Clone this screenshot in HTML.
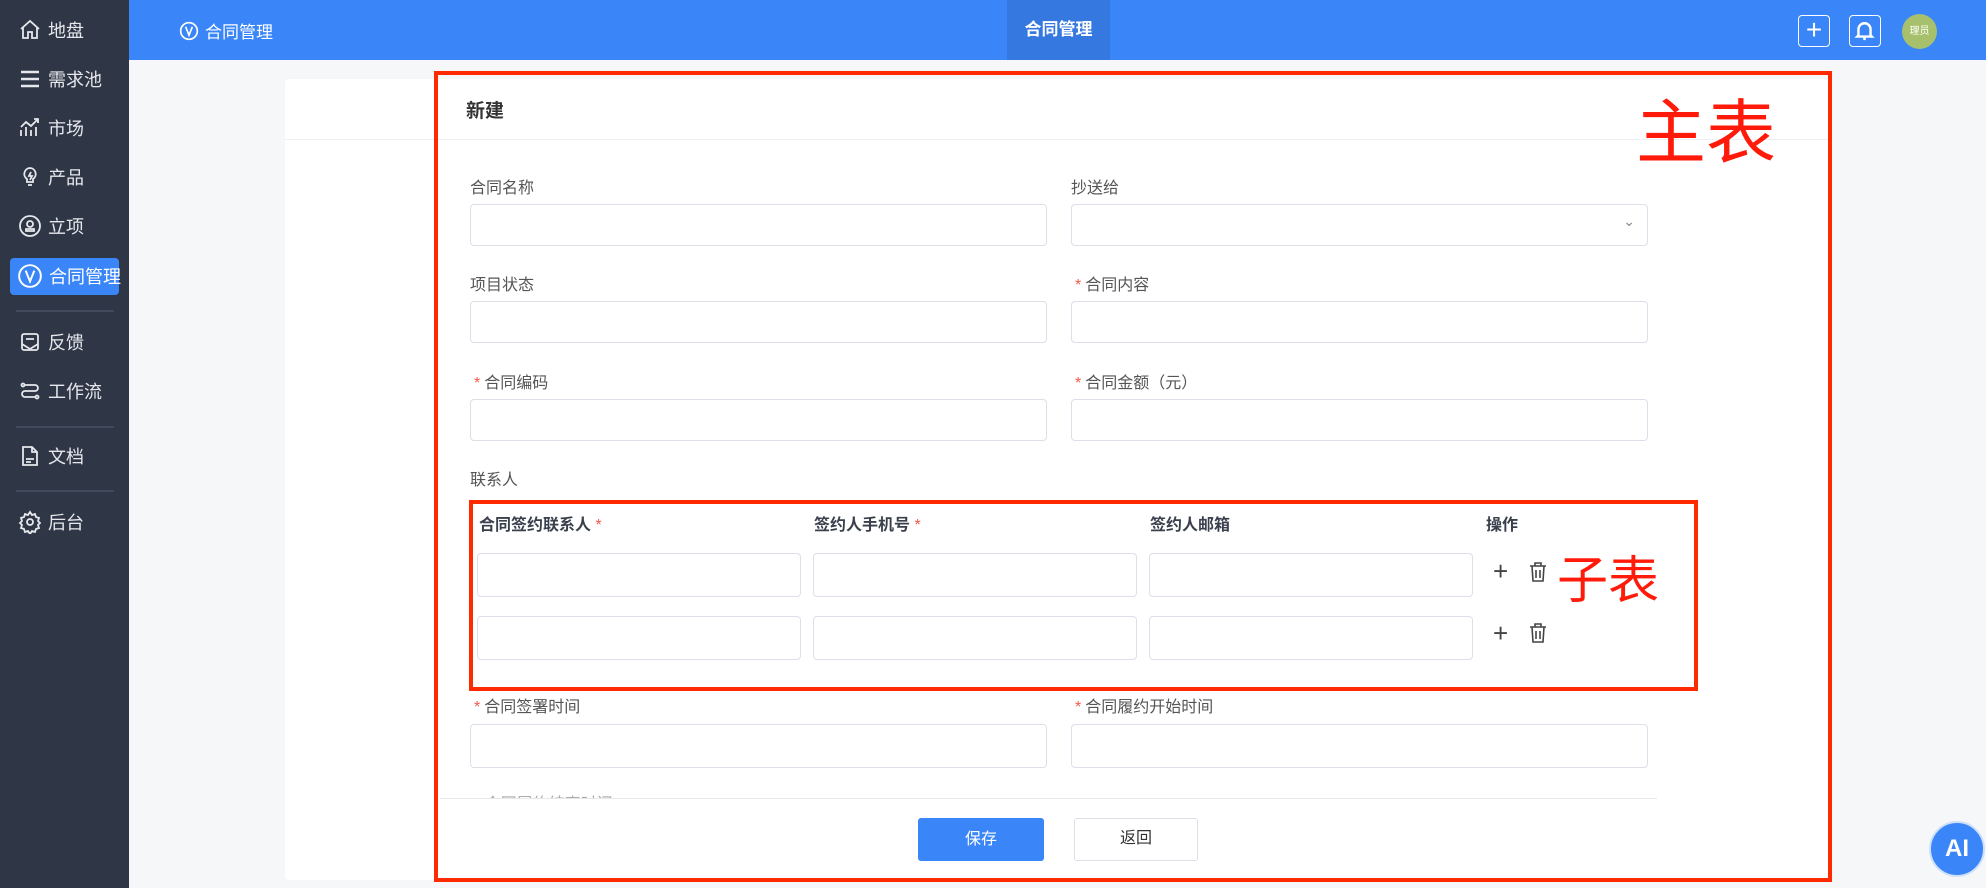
<!DOCTYPE html>
<html><head><meta charset="utf-8"><style>
*{margin:0;padding:0;box-sizing:border-box}
body{width:1986px;height:888px;overflow:hidden;background:#f6f7f9;font-family:"Liberation Sans","Noto Sans CJK SC",sans-serif;position:relative;color:#333}
.a{position:absolute}
#side{left:0;top:0;width:129px;height:888px;background:#2f3747}
.mi{position:absolute;left:18px;color:#e6e8ec;font-size:18px;display:flex;align-items:center;gap:6px;height:30px}
.mi svg{width:24px;height:24px;fill:none;stroke:#e6e8ec;stroke-width:1.8}
.sep{position:absolute;left:16px;width:98px;height:2px;background:#414a5a}
#hdr{left:129px;top:0;width:1857px;height:60px;background:#3a86f8}
.lbl{position:absolute;font-size:16px;color:#555}
.lbl b{color:#f5584a;font-weight:normal;margin-right:4px}
.in{position:absolute;height:42px;border:1.5px solid #dcdfe8;border-radius:4px;background:#fff}
.th{position:absolute;font-size:16px;font-weight:bold;color:#3a3f4c}
.th b{color:#f5584a;font-weight:normal}
.red{position:absolute;border:4px solid #ff2a00}
</style></head><body>
<div id="side" class="a">
 <div class="mi" style="top:15px"><svg viewBox="0 0 24 24"><path d="M3 11l9-8 9 8M5 9v11h5v-6h4v6h5V9"/></svg>地盘</div>
 <div class="mi" style="top:64px"><svg viewBox="0 0 24 24"><path d="M3 5h18M3 12h18M3 19h18" stroke-width="2.4"/></svg>需求池</div>
 <div class="mi" style="top:113px"><svg viewBox="0 0 24 24"><path d="M3 20v-6M8 20v-9M13 20v-6M18 20v-9M3 11l5-5 5 4 7-7M16 3h4v4"/></svg>市场</div>
 <div class="mi" style="top:162px"><svg viewBox="0 0 24 24"><path d="M12 3a6 6 0 0 0-3 11v3h6v-3a6 6 0 0 0-3-11zM10 20h4M13 7l-2 4h3l-2 4"/></svg>产品</div>
 <div class="mi" style="top:211px"><svg viewBox="0 0 24 24"><circle cx="12" cy="12" r="10"/><circle cx="12" cy="10" r="3"/><path d="M8 17h8v-2H8z"/></svg>立项</div>
 <div class="a" style="left:10px;top:258px;width:109px;height:37px;background:#3a86f8;border-radius:4px"></div>
 <div class="mi" style="top:261px;left:17px;color:#fff"><svg viewBox="0 0 24 24" style="stroke:#fff;width:26px;height:26px"><circle cx="12" cy="12" r="10"/><path d="M8 7l4 10 4-10"/></svg>合同管理</div>
 <div class="sep" style="top:310px"></div>
 <div class="mi" style="top:327px"><svg viewBox="0 0 24 24"><rect x="4" y="4" width="16" height="16" rx="2"/><path d="M4 14l8 5 8-5M8 9h8"/></svg>反馈</div>
 <div class="mi" style="top:376px"><svg viewBox="0 0 24 24"><circle cx="5" cy="6" r="1.5"/><circle cx="19" cy="18" r="1.5"/><path d="M7 6h10a3 3 0 0 1 0 6H7a3 3 0 0 0 0 6h10"/></svg>工作流</div>
 <div class="sep" style="top:426px"></div>
 <div class="mi" style="top:441px"><svg viewBox="0 0 24 24"><path d="M5 3h9l5 5v13H5zM14 3v5h5M8 15h8M8 18h5"/></svg>文档</div>
 <div class="sep" style="top:490px"></div>
 <div class="mi" style="top:507px"><svg viewBox="0 0 24 24"><circle cx="12" cy="12" r="3"/><path d="M12 2l2 3 3-1 1 3 3 1-1 3 2 2-2 2 1 3-3 1-1 3-3-1-2 3-2-3-3 1-1-3-3-1 1-3-2-2 2-2-1-3 3-1 1-3 3 1z"/></svg>后台</div>
</div>
<div id="hdr" class="a">
 <div class="a" style="left:50px;top:18px;color:#fff;font-size:17px;display:flex;align-items:center;gap:6px"><svg width="20" height="20" viewBox="0 0 24 24" fill="none" stroke="#fff" stroke-width="2"><circle cx="12" cy="12" r="10"/><path d="M8 7l4 10 4-10"/></svg>合同管理</div>
 <div class="a" style="left:878px;top:0;width:103px;height:60px;background:#3478e0;color:#fff;font-size:17px;font-weight:bold;text-align:center;line-height:60px">合同管理</div>
 <div class="a" style="left:1669px;top:15px;width:32px;height:32px;border:1.5px solid #fff;border-radius:4px;color:#fff;font-size:28px;line-height:28px;text-align:center">+</div>
 <div class="a" style="left:1720px;top:15px;width:32px;height:32px;border:1.5px solid #fff;border-radius:4px"><svg width="29" height="29" viewBox="0 0 24 24" fill="none" stroke="#fff" stroke-width="2"><path d="M7 16V11a5 5 0 0 1 10 0v5l1 1H6zM11 19h2M12 5v1"/></svg></div>
 <div class="a" style="left:1773px;top:14px;width:35px;height:35px;border-radius:50%;background:#a7c06b;color:#fff;font-size:10px;text-align:center;line-height:35px">理员</div>
</div>
<div class="a" style="left:285px;top:79px;width:1545px;height:801px;background:#fff;border-radius:4px"></div>
<div class="a" style="left:285px;top:139px;width:1545px;height:1px;background:#eef0f3"></div>
<div class="a" style="left:466px;top:96px;font-size:19px;font-weight:bold;color:#333">新建</div>
<div class="lbl" style="left:470px;top:174px">合同名称</div>
<div class="lbl" style="left:1071px;top:174px">抄送给</div>
<div class="in" style="left:470px;top:204px;width:577px"></div>
<div class="in" style="left:1071px;top:204px;width:577px"><span class="a" style="right:12px;top:8px;color:#888;font-size:14px">⌄</span></div>
<div class="lbl" style="left:470px;top:271px">项目状态</div>
<div class="lbl" style="left:1075px;top:271px"><b>*</b>合同内容</div>
<div class="in" style="left:470px;top:301px;width:577px"></div>
<div class="in" style="left:1071px;top:301px;width:577px"></div>
<div class="lbl" style="left:474px;top:369px"><b>*</b>合同编码</div>
<div class="lbl" style="left:1075px;top:369px"><b>*</b>合同金额（元）</div>
<div class="in" style="left:470px;top:399px;width:577px"></div>
<div class="in" style="left:1071px;top:399px;width:577px"></div>
<div class="lbl" style="left:470px;top:466px">联系人</div>
<div class="th" style="left:479px;top:511px">合同签约联系人 <b>*</b></div>
<div class="th" style="left:814px;top:511px">签约人手机号 <b>*</b></div>
<div class="th" style="left:1150px;top:511px">签约人邮箱</div>
<div class="th" style="left:1486px;top:511px">操作</div>
<div class="in" style="left:477px;top:553px;width:324px;height:44px"></div>
<div class="in" style="left:813px;top:553px;width:324px;height:44px"></div>
<div class="in" style="left:1149px;top:553px;width:324px;height:44px"></div>
<div class="in" style="left:477px;top:616px;width:324px;height:44px"></div>
<div class="in" style="left:813px;top:616px;width:324px;height:44px"></div>
<div class="in" style="left:1149px;top:616px;width:324px;height:44px"></div>
<div class="a" style="left:1493px;top:556px;font-size:26px;color:#444">+</div>
<div class="a" style="left:1493px;top:618px;font-size:26px;color:#444">+</div>
<svg class="a" style="left:1528px;top:561px" width="20" height="22" viewBox="0 0 20 22" fill="none" stroke="#444" stroke-width="1.6"><path d="M2 5h16M7 5V2h6v3M4 5l1 15h10l1-15M8 9v8M12 9v8"/></svg>
<svg class="a" style="left:1528px;top:622px" width="20" height="22" viewBox="0 0 20 22" fill="none" stroke="#444" stroke-width="1.6"><path d="M2 5h16M7 5V2h6v3M4 5l1 15h10l1-15M8 9v8M12 9v8"/></svg>
<div class="lbl" style="left:474px;top:693px"><b>*</b>合同签署时间</div>
<div class="lbl" style="left:1075px;top:693px"><b>*</b>合同履约开始时间</div>
<div class="in" style="left:470px;top:724px;width:577px;height:44px"></div>
<div class="in" style="left:1071px;top:724px;width:577px;height:44px"></div>
<div class="a" style="left:474px;top:790px;height:8px;overflow:hidden;font-size:16px;color:#aaa">* 合同履约结束时间</div>
<div class="a" style="left:440px;top:798px;width:1217px;height:1px;background:#e6e8ee"></div>
<div class="a" style="left:918px;top:818px;width:126px;height:43px;background:#3a86f8;border-radius:3px;color:#fff;font-size:16px;text-align:center;line-height:43px">保存</div>
<div class="a" style="left:1074px;top:818px;width:124px;height:43px;background:#fff;border:1.5px solid #dcdfe6;border-radius:3px;color:#333;font-size:16px;text-align:center;line-height:40px">返回</div>
<div class="red" style="left:434px;top:71px;width:1398px;height:811px"></div>
<div class="red" style="left:469px;top:500px;width:1229px;height:191px"></div>
<div class="a" style="left:1636px;top:98px;font-size:70px;color:#ff1a0a;line-height:1">主表</div>
<div class="a" style="left:1557px;top:555px;font-size:51px;color:#ff1a0a;line-height:1">子表</div>
<div class="a" style="left:1929px;top:821px;width:56px;height:56px;border-radius:50%;background:#3a86f8;border:2px solid #cfe0fb;color:#fff;font-size:24px;font-weight:bold;text-align:center;line-height:52px">AI</div>
</body></html>
